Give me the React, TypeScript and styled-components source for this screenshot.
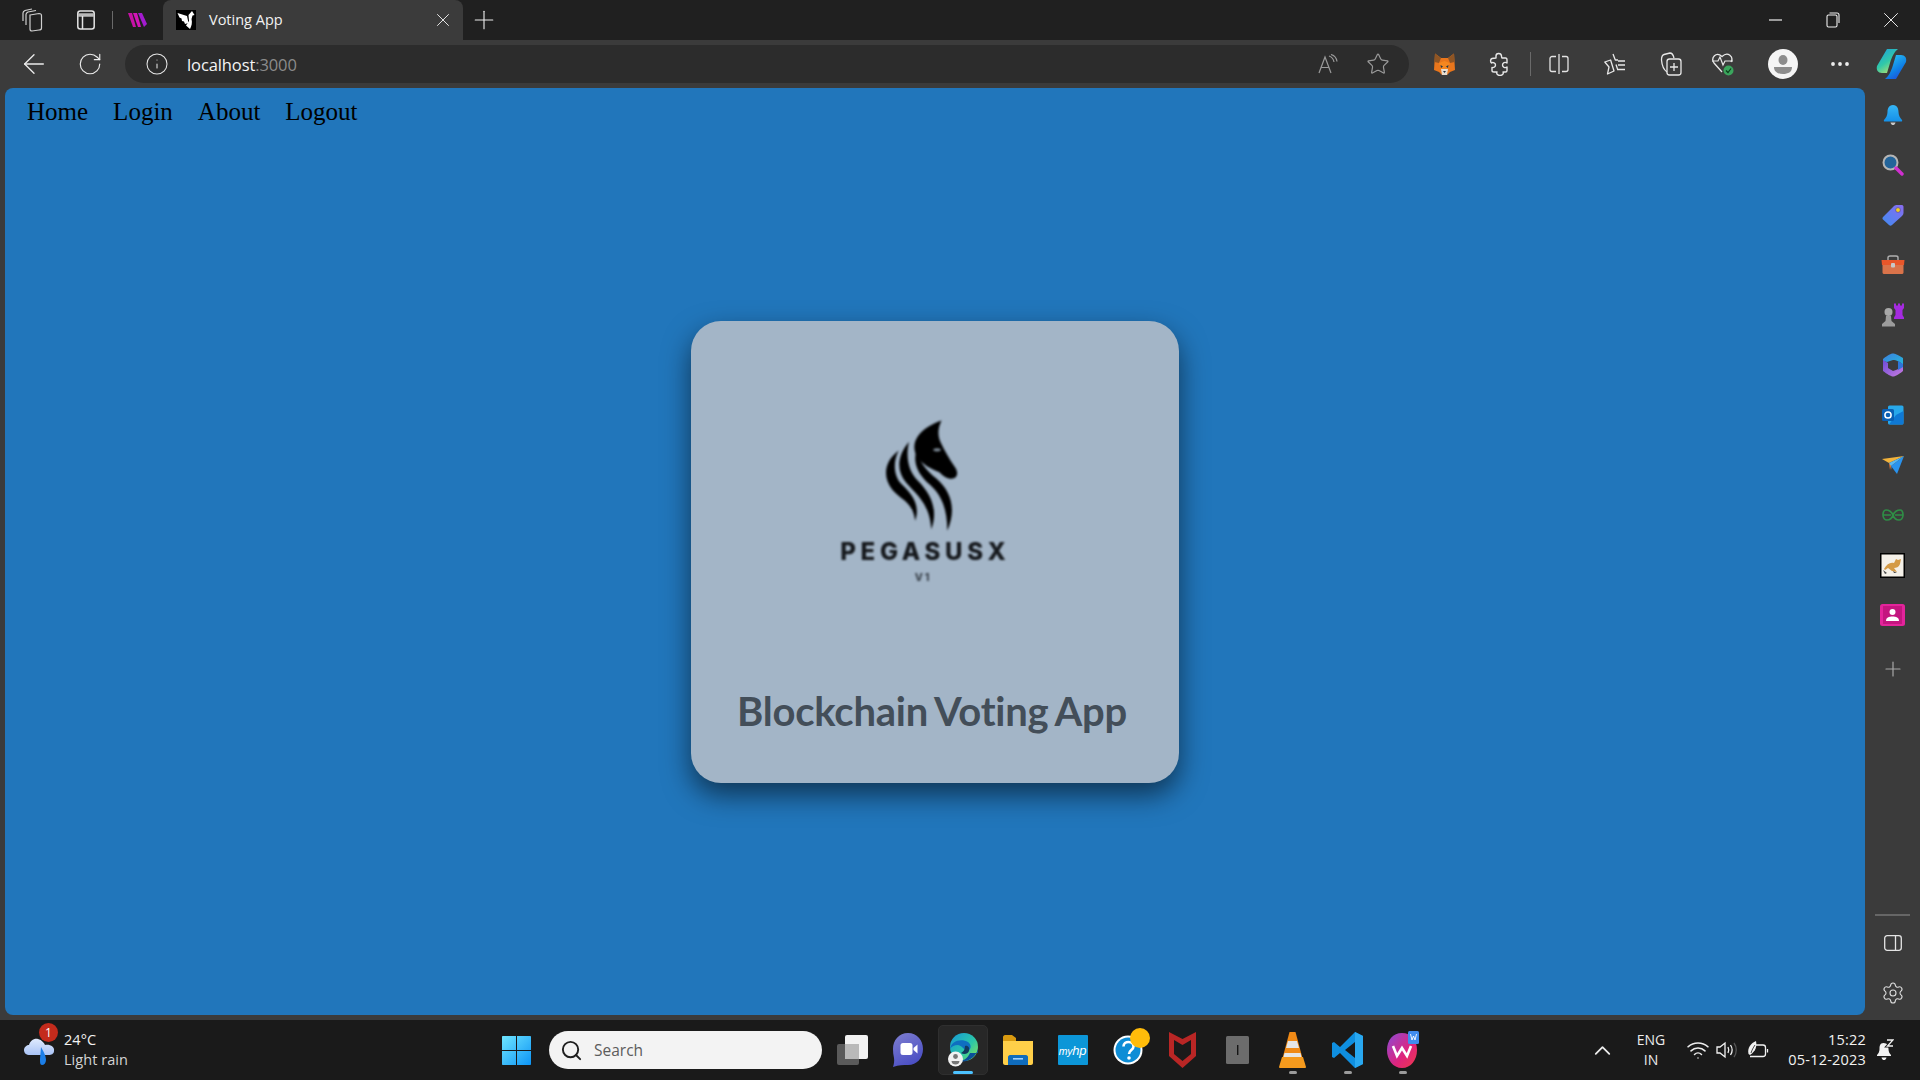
import styled, { createGlobalStyle } from "styled-components";
import { ArrowLeft, ChevronUp, Info, MoreHorizontal, Plus, RotateCw, Search, Settings, Star, Wifi, X } from "lucide-react";

const GlobalStyle = createGlobalStyle`
  html, body { margin: 0; padding: 0; height: 100%; overflow: hidden; }
  body { font-family: "Open Sans", "Noto Sans", sans-serif; background: #3b3b3b; }
  * { box-sizing: border-box; }
`;

const Frame = styled.div`
  display: flex;
  flex-direction: column;
  width: 1920px;
  height: 1080px;
  background: #3b3b3b;
`;

const Cell = styled.div<{ $w: number; $dim?: boolean }>`
  flex: 0 0 ${({ $w }) => $w}px;
  width: ${({ $w }) => $w}px;
  display: flex;
  align-items: center;
  justify-content: center;
  color: ${({ $dim }) => ($dim ? "#9a9a9a" : "#ececec")};
`;

const Spacer = styled.div`
  flex: 1;
`;

/* title bar */
const TitleBar = styled.div`
  display: flex;
  align-items: stretch;
  height: 40px;
  background: #202020;
  padding-left: 5px;
`;

const Divider = styled.div<{ $h: number }>`
  align-self: center;
  flex: 0 0 1px;
  width: 1px;
  height: ${({ $h }) => $h}px;
  background: #6a6a6a;
`;

const Tab = styled.div`
  flex: 0 0 300px;
  display: flex;
  align-items: center;
  background: #3b3b3b;
  border-radius: 8px 8px 0 0;
  padding: 0 9px 0 13px;
  color: #f2f2f2;
  font-size: 14.5px;
`;

const TabTitle = styled.span`
  flex: 1;
  margin-left: 13px;
  margin-top: -1px;
`;

/* toolbar */
const Toolbar = styled.div`
  display: flex;
  align-items: center;
  height: 48px;
  padding-left: 6px;
`;

const AddressBar = styled.div`
  flex: 0 0 1284px;
  height: 38px;
  margin-left: 7px;
  margin-right: 8px;
  padding: 0 6px 0 20px;
  display: flex;
  align-items: center;
  background: #2c2c2c;
  border-radius: 19px;
`;

const Url = styled.span`
  margin-left: 18px;
  font-family: "Open Sans", sans-serif;
  font-size: 16.5px;
  letter-spacing: -0.1px;
  color: #f5f5f5;
  span { color: #8b8b8b; }
`;

/* middle */
const Middle = styled.div`
  flex: 1;
  display: flex;
  min-height: 0;
  padding-left: 5px;
`;

const Page = styled.main`
  flex: 1;
  display: flex;
  flex-direction: column;
  background: #2176bb;
  border-radius: 8px;
  font-family: "Liberation Serif", "Times New Roman", serif;
`;

const Nav = styled.nav`
  display: flex;
  gap: 25px;
  padding: 9px 22px 0;
  height: 44px;
`;

const NavLink = styled.a`
  font-size: 25px;
  line-height: 30px;
  color: #000;
`;

const PageBody = styled.div`
  flex: 1;
  display: flex;
  align-items: center;
  justify-content: center;
  padding-bottom: 44px;
`;

const Card = styled.section`
  width: 488px;
  height: 462px;
  display: flex;
  flex-direction: column;
  align-items: center;
  padding-top: 97px;
  background: #a3b5c7;
  border-radius: 30px;
  box-shadow: 0 12px 28px rgba(0, 0, 0, 0.55);
`;

const Logo = styled.div`
  display: flex;
  flex-direction: column;
  align-items: center;
  margin-right: 24px;
  filter: blur(1.2px);
  color: #000;
`;

const LogoMark = styled.svg`
  display: block;
  width: 76px;
  height: 113px;
`;

const LogoName = styled.div`
  margin-top: 7px;
  font-family: Inter, "Open Sans", sans-serif;
  font-weight: 800;
  font-size: 24px;
  line-height: 28px;
  letter-spacing: 4.7px;
  margin-right: -4.7px;
  color: #16191d;
`;

const LogoVersion = styled.div`
  margin-top: 6px;
  font-family: Inter, "Open Sans", sans-serif;
  font-weight: 800;
  font-size: 10.5px;
  line-height: 12px;
  letter-spacing: 1.8px;
  color: #3c444d;
`;

const CardTitle = styled.h1`
  margin: 104px 6px 0 0;
  font-family: Lato, "Open Sans", sans-serif;
  font-weight: 700;
  font-size: 40px;
  line-height: 46px;
  letter-spacing: -0.25px;
  word-spacing: -2px;
  color: #434e59;
`;

/* side panel */
const SidePanel = styled.aside`
  flex: 0 0 55px;
  display: flex;
  flex-direction: column;
  align-items: center;
  padding-top: 2px;
`;

const SideItem = styled.div<{ $dim?: boolean; $h?: number }>`
  flex: 0 0 ${({ $h }) => $h ?? 50}px;
  display: flex;
  align-items: center;
  justify-content: center;
  color: ${({ $dim }) => ($dim ? "#a8a8a8" : "#dcdcdc")};
`;

const AddItem = styled(SideItem)`
  margin-top: 4px;
`;

const PanelItem = styled(SideItem)`
  margin-bottom: 3px;
`;

const SideRule = styled.div`
  width: 35px;
  height: 2px;
  margin-bottom: 2px;
  background: #666;
`;

const BottomGap = styled.div`
  flex: 0 0 5px;
`;

/* taskbar */
const Taskbar = styled.footer`
  display: flex;
  align-items: center;
  height: 60px;
  background: #1a1a1a;
  color: #f2f2f2;
  padding-right: 22px;
`;

const Weather = styled.div`
  flex: 0 0 489px;
  display: flex;
  align-items: center;
  padding-left: 24px;
`;

const WeatherIcon = styled.div`
  position: relative;
  width: 31px;
  height: 30px;
  margin-right: 9px;
`;

const Badge = styled.span`
  position: absolute;
  top: -12px;
  left: 15px;
  width: 19px;
  height: 19px;
  border-radius: 50%;
  background: #c42b1c;
  color: #fff;
  font-size: 12px;
  line-height: 19px;
  text-align: center;
`;

const WeatherText = styled.div`
  font-size: 14.5px;
  line-height: 20px;
  letter-spacing: 0.05px;
  span { display: block; color: #d4d4d4; }
`;

const SearchBox = styled.div`
  flex: 0 0 273px;
  height: 38px;
  margin: 0 3px 0 5px;
  padding-left: 11px;
  display: flex;
  align-items: center;
  gap: 11px;
  background: #f3f3f3;
  border-radius: 19px;
  color: #5c5c5c;
  font-size: 15.5px;
`;

const TaskIcon = styled.div<{ $active?: boolean; $mark?: "running" | "open" }>`
  position: relative;
  flex: 0 0 55px;
  width: 55px;
  height: 50px;
  display: flex;
  align-items: center;
  justify-content: center;

  &::before {
    content: "";
    position: absolute;
    inset: 0 2.5px;
    border-radius: 5px;
    background: ${({ $active }) => ($active ? "#272727" : "transparent")};
    border: 1px solid ${({ $active }) => ($active ? "#2f2f2f" : "transparent")};
  }

  &::after {
    content: "";
    display: ${({ $mark }) => ($mark ? "block" : "none")};
    position: absolute;
    left: 50%;
    bottom: 1px;
    height: 3px;
    border-radius: 2px;
    width: ${({ $mark }) => ($mark === "running" ? 20 : 8)}px;
    transform: translateX(-50%);
    background: ${({ $mark }) => ($mark === "running" ? "#4cc2ff" : "#9b9b9b")};
  }

  svg { position: relative; }
`;

const Lang = styled.div`
  font-size: 14px;
  line-height: 20px;
  text-align: center;
`;

const Clock = styled.div`
  flex: 0 0 92px;
  font-size: 14.5px;
  line-height: 20px;
  text-align: right;
  letter-spacing: 0.2px;
  white-space: nowrap;
`;

const IconWrap = styled.div`
  position: relative;
  display: flex;
`;

const Dot = styled.span`
  position: absolute;
  top: -7px;
  right: -7px;
  width: 20px;
  height: 20px;
  border-radius: 50%;
  background: #ffbc0a;
`;

const Favicon = () => (
  <svg width="20" height="20" viewBox="0 0 20 20">
    <rect width="20" height="20" fill="#000" />
    <path d="M1.5 3 L11 6 L12.5 13 L9 14 L8 11.5 L6 11 L5.5 8.5 L3.5 7.5 Z" fill="#fff" />
    <path d="M16 1 L18.5 5 L16.5 5.5 L15.5 9 C16.5 13 15.5 16 14 19 L10 15.5 L13 11 L12.5 5 Z" fill="#fff" />
  </svg>
);

const WorkspacesIcon = () => (
  <svg width="22" height="24" viewBox="0 0 22 24" fill="none" stroke="#cfcfcf" strokeWidth="1.2">
    <path d="M9 7 L18 5.5 C19.5 5.5 20.5 6.5 20.5 7.5 L20.5 20 C20.5 21 19.5 22 18 22 L11 23 C10 23 9 22 9 21 Z" />
    <path d="M5 17 L5 6.5 C5 5 6 4.5 7 4 L15 2.5" />
    <path d="M2 13 L2 5 C2 3.5 3 3 4 2.5 L11 1" />
  </svg>
);

const VerticalTabsIcon = () => (
  <svg width="18" height="20" viewBox="0 0 18 20" fill="none" stroke="#e4e4e4" strokeWidth="1.5">
    <rect x="0.8" y="1" width="16.4" height="18" rx="2.5" />
    <path d="M1 5 H17" strokeWidth="3.5" stroke="#b9b9b9" />
    <path d="M5.5 6 V19" />
  </svg>
);

const StripesLogo = () => (
  <svg width="20" height="16" viewBox="0 0 20 16" fill="#c811a8">
    <path d="M0 1 H4 L8 15 H5 Z" />
    <path d="M5 1 H9 L13 15 H10 Z" fill="#d414b8" />
    <path d="M10 1 H14 L19 12 L16 15 Z" fill="#a31bd0" />
  </svg>
);

const MinimizeIcon = () => (
  <svg width="14" height="2" viewBox="0 0 14 2"><path d="M0 1 H13" stroke="#efefef" strokeWidth="1.2" /></svg>
);

const RestoreIcon = () => (
  <svg width="14" height="16" viewBox="0 0 14 16" fill="none" stroke="#efefef" strokeWidth="1.1">
    <rect x="1" y="3" width="10" height="12" rx="1.5" />
    <path d="M3.5 1 H11 C12.3 1 13 1.8 13 3 V11" />
  </svg>
);

const ReadAloudIcon = () => (
  <svg width="20" height="20" viewBox="0 0 20 20" fill="none" stroke="#9a9a9a" strokeWidth="1.2">
    <path d="M1 19 L7 3 L13 19 M3.5 13.5 H10.5" />
    <path d="M11 2 C14 3 15.5 5 16 8 M13 0.5 C16.5 1.5 18.5 4 19 7.5" />
  </svg>
);

const FoxIcon = () => (
  <svg width="21" height="23" viewBox="0 0 21 23">
    <path d="M1 0.5 L7 5 H14 L20 0.5 L20.5 9 L21 17 L16 19 L13 22 H8 L5 19 L0 17 L0.5 9 Z" fill="#e9761c" />
    <path d="M1 0.5 L7 5 L5 10 L0.5 9 Z M20 0.5 L14 5 L16 10 L20.5 9 Z" fill="#8f5524" />
    <path d="M5 10 L10.5 8 L16 10 L14 16 H7 Z" fill="#f5871f" />
    <path d="M7 16 H14 L13 22 H8 Z" fill="#e6dccf" />
    <path d="M6.5 12 L9 13.5 L7 15 Z M14.5 12 L12 13.5 L14 15 Z" fill="#233447" />
    <path d="M9 18 H12 L10.5 20 Z" fill="#233447" />
  </svg>
);

const PuzzleIcon = () => (
  <svg width="20" height="24" viewBox="0 0 20 24" fill="none" stroke="#e8e8e8" strokeWidth="1.4" strokeLinejoin="round">
    <path d="M7 4 C7 1 12 0.5 12.5 4 C12.5 5 12.5 5.5 13 6 L16.5 6 C17.5 6 18 7 18 8 V11 C16 9.5 13.5 11 13.5 13 C13.5 15 16 16.5 18 15 V18.5 C18 19.5 17.5 20 16.5 20 H14 C15 22 13 23.5 11 23.5 C9 23.5 7 22 8 20 H5 C4 20 3 19.5 3 18.5 V15.5 C5 16 6.5 14.5 6.5 13 C6.5 11 4 10 2.5 11 C1 9.5 1.5 7 3 6.5 C4.5 6 5.5 6 7 6 Z" />
  </svg>
);

const SplitIcon = () => (
  <svg width="20" height="22" viewBox="0 0 20 22" fill="none" stroke="#e4e4e4" strokeWidth="1.3">
    <path d="M7 3.5 H3 C2 3.5 1 4.5 1 5.5 V16.5 C1 17.5 2 18.5 3 18.5 H7 M13 3.5 H17 C18 3.5 19 4.5 19 5.5 V16.5 C19 17.5 18 18.5 17 18.5 H13" />
    <path d="M10 1 V21" />
  </svg>
);

const FavoritesIcon = () => (
  <svg width="22" height="22" viewBox="0 0 22 22" fill="none" stroke="#e8e8e8" strokeWidth="1.3" strokeLinejoin="round">
    <path d="M9 1 L11.3 7 H14 M12 11.5 L13.5 16 M10 18 L3.5 21 L5 14 L0.8 9 L6.6 7 Z" />
    <path d="M14 8 H21 M14 12 H21 M13 16.5 H21" />
  </svg>
);

const CollectionsIcon = () => (
  <svg width="22" height="24" viewBox="0 0 22 24" fill="none" stroke="#e8e8e8" strokeWidth="1.3">
    <path d="M7 20 C4 18 2 14 1.5 8 C1.5 5 2 3 4 2.5 L10 1 C12 1 13 2 14 6" />
    <rect x="7" y="7" width="14" height="16" rx="2.5" />
    <path d="M14 11 V19 M10 15 H18" />
  </svg>
);

const HealthIcon = () => (
  <svg width="24" height="26" viewBox="0 0 24 26" fill="none">
    <path d="M11 21 L3 12 C-0.5 7 5 0 11 5.5 C17 0 23 6 20 11" stroke="#e8e8e8" strokeWidth="1.3" />
    <path d="M1 10 H7 L9 6 L12 14 L14 10 H22" stroke="#e8e8e8" strokeWidth="1.2" />
    <circle cx="17.5" cy="19.5" r="5" fill="#3ba55d" />
    <path d="M15 19.5 L17 21.5 L20 17.5" stroke="#0c3d1c" strokeWidth="1.2" />
  </svg>
);

const ProfileIcon = () => (
  <svg width="30" height="30" viewBox="0 0 30 30">
    <circle cx="15" cy="15" r="15" fill="#f5f5f5" />
    <ellipse cx="15" cy="11" rx="4.5" ry="5" fill="#8d8d8d" />
    <path d="M6 18 H24 C24 23 20 25 15 25 C10 25 6 23 6 18 Z" fill="#8d8d8d" />
  </svg>
);

const CopilotIcon = () => (
  <svg width="31" height="32" viewBox="0 0 31 32">
    <defs>
      <linearGradient id="copA" x1="0" y1="0" x2="0.6" y2="1">
        <stop offset="0" stopColor="#1c9be0" />
        <stop offset="0.6" stopColor="#31c8a8" />
        <stop offset="1" stopColor="#a8df74" />
      </linearGradient>
      <linearGradient id="copB" x1="0.2" y1="0" x2="0.8" y2="1">
        <stop offset="0" stopColor="#2cc5f2" />
        <stop offset="0.6" stopColor="#0f80e6" />
        <stop offset="1" stopColor="#2246d8" />
      </linearGradient>
    </defs>
    <path d="M11 1 H22 C19 3 16 8 14 15 L11 25 H6 C2 25 0 22 1 18 Z" fill="url(#copA)" />
    <path d="M20 31 H9 C12 29 15 24 17 17 L20 7 H25 C29 7 31 10 30 14 Z" fill="url(#copB)" />
  </svg>
);

const BellColorIcon = () => (
  <svg width="20" height="22" viewBox="0 0 20 22">
    <defs>
      <linearGradient id="bellG" x1="0" y1="0" x2="0" y2="1">
        <stop offset="0" stopColor="#36b6f5" />
        <stop offset="1" stopColor="#1590e8" />
      </linearGradient>
    </defs>
    <path d="M10 1 C14.5 1 15.5 5 15.5 8 C15.5 11 17 14 19 16 C19.5 17 19 17.5 18 17.5 H2 C1 17.5 0.5 17 1 16 C3 14 4.5 11 4.5 8 C4.5 5 5.5 1 10 1 Z" fill="url(#bellG)" />
    <path d="M7.5 18.5 H12.5 C12 20.5 11 21 10 21 C9 21 8 20.5 7.5 18.5 Z" fill="#c9c9c9" />
  </svg>
);

const SearchColorIcon = () => (
  <svg width="22" height="22" viewBox="0 0 22 22" fill="none">
    <circle cx="8.5" cy="8.5" r="7" fill="#23649a" stroke="#b5b5b5" strokeWidth="2" />
    <path d="M14 14 L20 20" stroke="#d02fd0" strokeWidth="3.4" strokeLinecap="round" />
  </svg>
);

const TagIcon = () => (
  <svg width="22" height="22" viewBox="0 0 22 22">
    <defs>
      <linearGradient id="tagG" x1="0" y1="1" x2="1" y2="0">
        <stop offset="0" stopColor="#3f8bf0" />
        <stop offset="1" stopColor="#8a6cf0" />
      </linearGradient>
    </defs>
    <path d="M1 13 L12 2 C13 1 14 1 15 1 H20 C21 1 21.5 2 21.5 3 V9 C21.5 10 21 11 20 12 L10 21 C9 22 8 22 7 21 L1 15.5 C0.3 15 0.3 14 1 13 Z" fill="url(#tagG)" />
    <circle cx="16" cy="6" r="2.4" fill="#f2d21a" stroke="#5c4bb0" strokeWidth="0.8" />
  </svg>
);

const ToolboxIcon = () => (
  <svg width="24" height="20" viewBox="0 0 24 20">
    <path d="M7 5 V2.5 C7 1.5 8 1 9 1 H15 C16 1 17 1.5 17 2.5 V5" fill="none" stroke="#b0b0b0" strokeWidth="1.4" />
    <path d="M0.5 5 H23.5 L23 10 H1 Z" fill="#e8562a" />
    <path d="M1.5 10 H22.5 V17.5 C22.5 18.5 21.5 19 20.5 19 H3.5 C2.5 19 1.5 18.5 1.5 17.5 Z" fill="#d9734a" />
    <rect x="10" y="8" width="4" height="4.5" rx="1" fill="#c8c8c8" />
  </svg>
);

const ChessIcon = () => (
  <svg width="24" height="24" viewBox="0 0 24 24">
    <path d="M13 0.5 H15 V2.5 H17 V0.5 H19 V2.5 H21 V0.5 H23 V5 L21.5 7 V12 L23 14.5 V16 H13 V14.5 L14.5 12 V7 L13 5 Z" fill="#a52be0" />
    <circle cx="7.5" cy="9" r="4" fill="#a8a8a8" />
    <path d="M5 13 H10 L10.5 18 L14 21 V23.5 H1 V21 L4.5 18 Z" fill="#9c9c9c" />
  </svg>
);

const M365Icon = () => (
  <svg width="22" height="24" viewBox="0 0 22 24">
    <defs>
      <linearGradient id="m3A" x1="0" y1="0" x2="1" y2="1">
        <stop offset="0" stopColor="#3d7fe0" />
        <stop offset="1" stopColor="#23b8d8" />
      </linearGradient>
      <linearGradient id="m3B" x1="0" y1="0" x2="1" y2="1">
        <stop offset="0" stopColor="#6d4cd6" />
        <stop offset="1" stopColor="#c77be0" />
      </linearGradient>
    </defs>
    <path d="M11 0.5 C13 0.5 15 1.5 21 5 V12 C19 9 14 7 11 7 L5 9 L1 8 V6 C6 2 9 0.5 11 0.5 Z" fill="url(#m3A)" />
    <path d="M1 7 L6 10 V15 L11 18 C15 17 19 15 21 12 V18 C16 22 13 23.5 11 23.5 C9 23.5 5 21 1 18 Z" fill="url(#m3B)" />
    <path d="M16 8 L21 11 V14 L16 17 Z" fill="#2f74d8" />
  </svg>
);

const OutlookIcon = () => (
  <svg width="22" height="20" viewBox="0 0 22 20">
    <rect x="6" y="0.5" width="15.5" height="19" rx="1.5" fill="#28a8ea" />
    <path d="M14 10 L21.5 6 V18 C21.5 19 21 19.5 20 19.5 H7 Z" fill="#0f78d4" />
    <rect x="0" y="4" width="12" height="12" rx="1.5" fill="#0a5fb3" />
    <circle cx="6" cy="10" r="3.1" fill="none" stroke="#fff" strokeWidth="1.5" />
  </svg>
);

const PlaneIcon = () => (
  <svg width="22" height="18" viewBox="0 0 22 18">
    <path d="M0 3 L22 0 L7 7 Z" fill="#f2b33c" />
    <path d="M22 0 L15 18 L9 10 Z" fill="#2a93ee" />
    <path d="M22 0 L7 7 L10 14 L9 10 Z" fill="#59b8f2" />
    <path d="M7 7 L9 10 L8 14 Z" fill="#e8732a" />
  </svg>
);

const GfgIcon = () => (
  <svg width="22" height="12" viewBox="0 0 22 12" fill="none" stroke="#2f8d46" strokeWidth="1.7">
    <path d="M11 6 C9 2 6 1 4 1 C2 1 1 3 1 6 C1 9 3 11 5 11 C8 11 10 9 11 6 C12 9 14 11 17 11 C19 11 21 9 21 6 C21 3 20 1 18 1 C16 1 13 2 11 6 Z" />
    <path d="M1 6 H9 M13 6 H21" />
  </svg>
);

const TomcatIcon = () => (
  <svg width="25" height="25" viewBox="0 0 25 25">
    <rect x="0.75" y="0.75" width="23.5" height="23.5" fill="#f4f0e8" stroke="#000" strokeWidth="1.5" />
    <path d="M4 16 C7 11 10 9 14 10 L16 6 L18 7 L21 6 L20 11 C19 14 16 15 14 15 L17 19 L12 18 L8 15 L5 17 Z" fill="#d49a45" />
    <path d="M3 17 L7 20 L5 21 Z M13 18 L17 20 L14 20 Z" fill="#4b4b4b" />
  </svg>
);

const ContactIcon = () => (
  <svg width="25" height="22" viewBox="0 0 25 22">
    <rect width="25" height="22" rx="2.5" fill="#e3249b" />
    <rect x="3" y="2" width="19" height="18" fill="#c4157f" />
    <circle cx="12.5" cy="8" r="3" fill="#fff" />
    <path d="M6 17 C6 13.5 9 12.5 12.5 12.5 C16 12.5 19 13.5 19 17 Z" fill="#fff" />
  </svg>
);

const PanelIcon = () => (
  <svg width="18" height="16" viewBox="0 0 18 16" fill="none" stroke="#e4e4e4" strokeWidth="1.3">
    <rect x="0.7" y="0.7" width="16.6" height="14.6" rx="2.5" />
    <path d="M11.5 1 V15" />
  </svg>
);

const CloudRainIcon = () => (
  <svg width="31" height="30" viewBox="0 0 31 30">
    <defs>
      <linearGradient id="cloudG" x1="0" y1="0" x2="0" y2="1">
        <stop offset="0" stopColor="#dfeafd" />
        <stop offset="1" stopColor="#a9c3f6" />
      </linearGradient>
    </defs>
    <path d="M6 20 C2 20 0 18 0 15 C0 12 3 10 5 10 C6 6 10 3 14 4 C18 5 20 8 21 10 C26 9 31 12 30 16 C30 19 27 20 25 20 Z" fill="url(#cloudG)" />
    <path d="M17 12 C19 16 22 20 22 25 C22 28 20 30 18 30 C16 30 16 27 16 24 Z" fill="#1b7ee8" />
  </svg>
);

const WindowsIcon = () => (
  <svg width="29" height="29" viewBox="0 0 29 29">
    <defs>
      <linearGradient id="winG" x1="0" y1="0" x2="1" y2="1">
        <stop offset="0" stopColor="#6fe6ff" />
        <stop offset="1" stopColor="#0d94f5" />
      </linearGradient>
    </defs>
    <path d="M0 1 C0 0.4 0.4 0 1 0 H14 V14 H0 Z M15 0 H28 C28.6 0 29 0.4 29 1 V14 H15 Z M0 15 H14 V29 H1 C0.4 29 0 28.6 0 28 Z M15 15 H29 V28 C29 28.6 28.6 29 28 29 H15 Z" fill="url(#winG)" />
  </svg>
);

const TaskViewIcon = () => (
  <svg width="31" height="30" viewBox="0 0 31 30">
    <rect x="0" y="9" width="22" height="21" rx="2" fill="#5a5a5a" />
    <rect x="8" y="0" width="23" height="24" rx="2" fill="#f2f2f2" />
    <rect x="8" y="9" width="14" height="15" fill="#b9b9b9" />
  </svg>
);

const MeetIcon = () => (
  <svg width="30" height="34" viewBox="0 0 30 34">
    <defs>
      <linearGradient id="meetG" x1="0" y1="0" x2="0.5" y2="1">
        <stop offset="0" stopColor="#7f7fd0" />
        <stop offset="1" stopColor="#4b4fc4" />
      </linearGradient>
    </defs>
    <path d="M15 0 C24 0 30 7 30 16 C30 25 24 32 15 32 C10 32 6 32 0 34 C1 31 1.5 28 1 25 C0.3 22 0 19 0 16 C0 7 6 0 15 0 Z" fill="url(#meetG)" />
    <rect x="7.5" y="10" width="12" height="12" rx="2.5" fill="#fff" />
    <path d="M20.5 15 L24.5 11.5 V20.5 L20.5 17 Z" fill="#fff" />
  </svg>
);

const EdgeIcon = () => (
  <svg width="30" height="36" viewBox="0 0 30 36">
    <defs>
      <linearGradient id="edgeA" x1="0" y1="0" x2="1" y2="0.9">
        <stop offset="0" stopColor="#1597d8" />
        <stop offset="0.6" stopColor="#2bc6a8" />
        <stop offset="1" stopColor="#86e25a" />
      </linearGradient>
    </defs>
    <circle cx="16" cy="15" r="14" fill="url(#edgeA)" />
    <path d="M2 17 C3 9 13 6 20 10 C24 13 23 18 20 18 C15 18 15 14 10 13 C6 13 3 15 2 17 Z" fill="#0f6fc0" />
    <path d="M30 17 C28 25 20 31 11 29 C17 29 20 25 22 21 H30 Z" fill="#0b4f98" />
    <path d="M17 14 C20 13 22 16 21 19 C20 22 16 23 13 21 C15 20 17 18 17 14 Z" fill="#123a5e" />
    <circle cx="7.5" cy="27" r="7.5" fill="#f2f2f2" />
    <circle cx="7.5" cy="24.5" r="2.4" fill="#777" />
    <path d="M3.5 29 H11.5 C11.5 31.5 9.5 32.5 7.5 32.5 C5.5 32.5 3.5 31.5 3.5 29 Z" fill="#777" />
  </svg>
);

const FolderIcon = () => (
  <svg width="30" height="30" viewBox="0 0 30 30">
    <path d="M0 2 C0 1 1 0 2 0 H9 L13 3 V7 H0 Z" fill="#d99a10" />
    <path d="M0 6 H30 V28 C30 29 29 30 28 30 H2 C1 30 0 29 0 28 Z" fill="#ffcf49" />
    <path d="M5 22 C5 21 6 20 7 20 H23 C24 20 25 21 25 22 V30 H5 Z" fill="#0f6cbd" />
    <rect x="10" y="23" width="10" height="1.6" fill="#9fd0ff" />
  </svg>
);

const HpIcon = () => (
  <svg width="30" height="30" viewBox="0 0 30 30">
    <rect width="30" height="30" rx="1" fill="#0c96d8" />
  </svg>
);

const HpLabel = styled.span`
  position: absolute;
  top: 50%;
  left: 50%;
  transform: translate(-50%, -50%);
  font-family: "Liberation Sans", sans-serif;
  font-style: italic;
  font-size: 10.5px;
  letter-spacing: -0.3px;
  color: #fff;
  b { font-size: 13px; font-weight: 400; }
`;

const HelpIcon = () => (
  <svg width="30" height="30" viewBox="0 0 30 30">
    <circle cx="15" cy="15" r="14.5" fill="#fff" />
    <circle cx="15" cy="15" r="12.5" fill="#0d8dd6" />
    <path d="M10.5 11.5 C10.5 8.5 13 7 15.5 7 C18.5 7 20.5 9 20.5 11.5 C20.5 15 16 15 16 19" fill="none" stroke="#fff" strokeWidth="2.6" />
    <circle cx="16" cy="23" r="1.8" fill="#fff" />
  </svg>
);

const McafeeIcon = () => (
  <svg width="27" height="36" viewBox="0 0 27 36">
    <path d="M0 0 L13.5 7 L27 0 V24 L13.5 36 L0 24 Z M5 8 V22 L13.5 29 L22 22 V8 L13.5 13 Z" fill="#b92625" fillRule="evenodd" />
  </svg>
);

const GrayAppIcon = () => (
  <svg width="23" height="28" viewBox="0 0 23 28">
    <rect width="23" height="28" rx="1.5" fill="#6c6c6c" />
    <rect x="11" y="9" width="1.4" height="10" fill="#151515" />
  </svg>
);

const VlcIcon = () => (
  <svg width="27" height="36" viewBox="0 0 27 36">
    <path d="M10.5 0 H16.5 L24 28 H3 Z" fill="#f08a16" />
    <path d="M9 9 H18 L20 16 H7 Z" fill="#e6e6e6" />
    <path d="M5.5 21 H21.5 L22.5 25 H4.5 Z" fill="#e6e6e6" />
    <path d="M3 25 H24 L27 35 C27 35.5 26.5 36 26 36 H1 C0.5 36 0 35.5 0 35 Z" fill="#f59a1d" />
  </svg>
);

const VscodeIcon = () => (
  <svg width="31" height="36" viewBox="0 0 31 36">
    <path d="M23 0 L31 4 V32 L23 36 L8 21 L2 26 L0 25 V11 L2 10 L8 15 Z M23 10 L13 18 L23 26 Z" fill="#0f8fe0" fillRule="evenodd" />
    <path d="M23 0 L31 4 V32 L23 36 Z" fill="#29a8f0" />
  </svg>
);

const WpsIcon = () => (
  <svg width="32" height="38" viewBox="0 0 32 38">
    <defs>
      <linearGradient id="wpsG" x1="0" y1="0" x2="1" y2="1">
        <stop offset="0" stopColor="#8a4bd8" />
        <stop offset="0.6" stopColor="#e0247c" />
        <stop offset="1" stopColor="#ef3a4a" />
      </linearGradient>
    </defs>
    <path d="M15 2 C24 2 30 9 30 19 C30 29 24 37 15 37 C6 37 0 29 0 19 C0 9 6 2 15 2 Z" fill="url(#wpsG)" />
    <path d="M6 15 L10 25 L15 17 L20 25 L24 15" fill="none" stroke="#fff" strokeWidth="2.6" />
    <rect x="21" y="0" width="11" height="13" rx="1.5" fill="#3f8cef" />
    <path d="M23.5 3 L25 9 L26.5 5 L28 9 L29.5 3" fill="none" stroke="#fff" strokeWidth="0.9" />
  </svg>
);

const SpeakerIcon = () => (
  <svg width="22" height="18" viewBox="0 0 22 18" fill="none" stroke="#f2f2f2" strokeWidth="1.3">
    <path d="M1 6 H4 L9 2 V16 L4 12 H1 Z" />
    <path d="M12 6 C13 8 13 10 12 12 M14.5 4 C16.5 7 16.5 11 14.5 14" />
    <path d="M18 2 C21 6 21 12 18 16" stroke="#555" />
  </svg>
);

const BatteryIcon = () => (
  <svg width="22" height="20" viewBox="0 0 22 20" fill="none" stroke="#f2f2f2" strokeWidth="1.3">
    <path d="M9 5 H16 C17.5 5 18.5 6 18.5 7.5 V14 C18.5 15.5 17.5 16.5 16 16.5 H3" />
    <path d="M20.5 9 V12.5" />
    <path d="M1.5 14 C0 8 4 3 9 1 C10 6 9 11 3 15 Z" fill="#f2f2f2" stroke="none" />
    <path d="M4 13 C5 10 6 8 8 5" stroke="#1a1a1a" strokeWidth="0.8" />
  </svg>
);

const SleepBellIcon = () => (
  <svg width="18" height="22" viewBox="0 0 18 22">
    <path d="M7.5 4 C11.5 4 12.5 7 12.5 10 C12.5 12.5 13.5 14.5 15 16 V17 H1 V16 C2.5 14.5 3.5 12.5 3.5 10 C3.5 7 4 4 7.5 4 Z" fill="#f2f2f2" />
    <path d="M5.5 18.5 H10.5 C10 20.5 9 21 8 21 C7 21 6 20.5 5.5 18.5 Z" fill="#f2f2f2" />
    <path d="M11 1 H17 L11.5 7 H17" fill="none" stroke="#1a1a1a" strokeWidth="3" />
    <path d="M11 1 H17 L11.5 7 H17" fill="none" stroke="#f2f2f2" strokeWidth="1.3" />
  </svg>
);

const navLinks = ["Home", "Login", "About", "Logout"];

export default function App() {
  return (
    <Frame>
      <GlobalStyle />
      <TitleBar>
        <Cell $w={54}><WorkspacesIcon /></Cell>
        <Cell $w={53}><VerticalTabsIcon /></Cell>
        <Divider $h={18} />
        <Cell $w={50}><StripesLogo /></Cell>
        <Tab>
          <Favicon />
          <TabTitle>Voting App</TabTitle>
          <X size={22} strokeWidth={1} />
        </Tab>
        <Cell $w={42}><Plus size={30} strokeWidth={0.9} /></Cell>
        <Spacer />
        <Cell $w={57}><MinimizeIcon /></Cell>
        <Cell $w={58}><RestoreIcon /></Cell>
        <Cell $w={58}><X size={26} strokeWidth={0.9} /></Cell>
      </TitleBar>

      <Toolbar>
        <Cell $w={56}><ArrowLeft size={32} strokeWidth={1} /></Cell>
        <Cell $w={56}><RotateCw size={26} strokeWidth={1.05} /></Cell>
        <AddressBar>
          <Info size={24} strokeWidth={1.05} color="#e6e6e6" />
          <Url>localhost<span>:3000</span></Url>
          <Spacer />
          <Cell $w={50}><ReadAloudIcon /></Cell>
          <Cell $w={50} $dim><Star size={24} strokeWidth={1.2} /></Cell>
        </AddressBar>
        <Cell $w={54}><FoxIcon /></Cell>
        <Cell $w={56}><PuzzleIcon /></Cell>
        <Cell $w={6}><Divider $h={24} /></Cell>
        <Cell $w={52}><SplitIcon /></Cell>
        <Cell $w={60}><FavoritesIcon /></Cell>
        <Cell $w={52}><CollectionsIcon /></Cell>
        <Cell $w={52}><HealthIcon /></Cell>
        <Cell $w={68}><ProfileIcon /></Cell>
        <Cell $w={46}><MoreHorizontal size={24} strokeWidth={1.8} /></Cell>
        <Cell $w={57}><CopilotIcon /></Cell>
      </Toolbar>

      <Middle>
        <Page>
          <Nav>
            {navLinks.map((label) => (
              <NavLink key={label}>{label}</NavLink>
            ))}
          </Nav>
          <PageBody>
            <Card>
              <Logo>
                <LogoMark viewBox="200 55 222 330">
                  <path d="M365 62 C338 72 312 85 296 108 C282 128 282 152 298 175 C318 198 345 208 360 214 C370 226 385 234 398 232 C414 228 414 212 404 198 C388 175 374 150 362 125 C354 105 354 85 365 62 Z" fill="currentColor" />
                  <ellipse cx="352" cy="148" rx="11" ry="5" fill="#7f8c99" />
                  <path d="M240 150 C200 180 190 225 222 265 C248 295 282 300 288 355 C306 305 272 272 248 248 C226 225 222 185 240 150 Z" fill="currentColor" />
                  <path d="M270 124 C236 165 232 208 262 244 C292 278 332 308 335 380 C358 320 330 272 296 238 C268 210 260 170 270 124 Z" fill="currentColor" />
                  <path d="M292 150 C282 180 292 212 322 242 C360 272 382 312 382 384 C410 320 392 268 350 232 C320 208 300 182 292 150 Z" fill="currentColor" />
                </LogoMark>
                <LogoName>PEGASUSX</LogoName>
                <LogoVersion>V1</LogoVersion>
              </Logo>
              <CardTitle>Blockchain Voting App</CardTitle>
            </Card>
          </PageBody>
        </Page>
        <SidePanel>
          <SideItem><BellColorIcon /></SideItem>
          <SideItem><SearchColorIcon /></SideItem>
          <SideItem><TagIcon /></SideItem>
          <SideItem><ToolboxIcon /></SideItem>
          <SideItem><ChessIcon /></SideItem>
          <SideItem><M365Icon /></SideItem>
          <SideItem><OutlookIcon /></SideItem>
          <SideItem><PlaneIcon /></SideItem>
          <SideItem><GfgIcon /></SideItem>
          <SideItem><TomcatIcon /></SideItem>
          <SideItem><ContactIcon /></SideItem>
          <AddItem $dim><Plus size={24} strokeWidth={1.2} /></AddItem>
          <Spacer />
          <SideRule />
          <PanelItem><PanelIcon /></PanelItem>
          <SideItem $h={44}><Settings size={24} strokeWidth={1.1} /></SideItem>
        </SidePanel>
      </Middle>

      <BottomGap />

      <Taskbar>
        <Weather>
          <WeatherIcon>
            <CloudRainIcon />
            <Badge>1</Badge>
          </WeatherIcon>
          <WeatherText>24°C<span>Light rain</span></WeatherText>
        </Weather>
        <Cell $w={55}><WindowsIcon /></Cell>
        <SearchBox>
          <Search size={23} strokeWidth={2} color="#1f1f1f" />
          Search
        </SearchBox>
        <TaskIcon><TaskViewIcon /></TaskIcon>
        <TaskIcon><MeetIcon /></TaskIcon>
        <TaskIcon $active $mark="running"><EdgeIcon /></TaskIcon>
        <TaskIcon><FolderIcon /></TaskIcon>
        <TaskIcon>
          <IconWrap>
            <HpIcon />
            <HpLabel>my<b>hp</b></HpLabel>
          </IconWrap>
        </TaskIcon>
        <TaskIcon>
          <IconWrap>
            <HelpIcon />
            <Dot />
          </IconWrap>
        </TaskIcon>
        <TaskIcon><McafeeIcon /></TaskIcon>
        <TaskIcon><GrayAppIcon /></TaskIcon>
        <TaskIcon $mark="open"><VlcIcon /></TaskIcon>
        <TaskIcon $mark="open"><VscodeIcon /></TaskIcon>
        <TaskIcon $mark="open"><WpsIcon /></TaskIcon>
        <Spacer />
        <Cell $w={40}><ChevronUp size={27} strokeWidth={1.6} /></Cell>
        <Cell $w={58}><Lang>ENG<br />IN</Lang></Cell>
        <Cell $w={4} />
        <Cell $w={28}><Wifi size={24} strokeWidth={1.5} /></Cell>
        <Cell $w={30}><SpeakerIcon /></Cell>
        <Cell $w={32}><BatteryIcon /></Cell>
        <Clock>15:22<br />05-12-2023</Clock>
        <Cell $w={6} />
        <Cell $w={26}><SleepBellIcon /></Cell>
      </Taskbar>
    </Frame>
  );
}
